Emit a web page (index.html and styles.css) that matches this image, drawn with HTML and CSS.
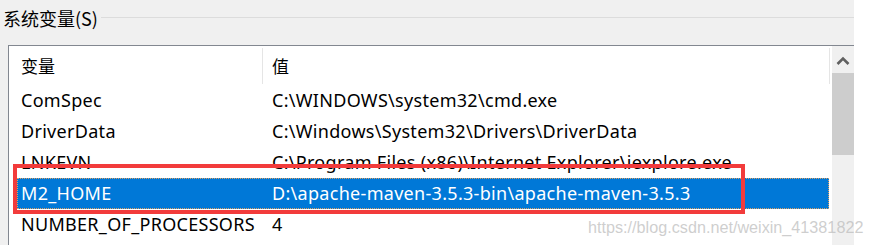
FILE: index.html
```html
<!DOCTYPE html>
<html lang="zh-CN">
<head>
<meta charset="utf-8">
<title>系统变量</title>
<link rel="stylesheet" href="styles.css">
</head>
<body>
<div class="dialog">
  <div class="group-head">
    <span class="group-title">系统变量(S)</span>
    <span class="group-line"></span>
  </div>
  <div class="list">
    <div class="list-body">
      <div class="hdr">
        <div class="hcell hcell-name">变量</div>
        <div class="hcell hcell-value">值</div>
      </div>
      <div class="row"><div class="c-name">ComSpec</div><div class="c-value">C:\WINDOWS\system32\cmd.exe</div></div>
      <div class="row"><div class="c-name">DriverData</div><div class="c-value">C:\Windows\System32\Drivers\DriverData</div></div>
      <div class="row"><div class="c-name">LNKEVN</div><div class="c-value">C:\Program Files (x86)\Internet Explorer\iexplore.exe</div></div>
      <div class="row row-selected"><div class="c-name">M2_HOME</div><div class="c-value">D:\apache-maven-3.5.3-bin\apache-maven-3.5.3</div></div>
      <div class="row"><div class="c-name">NUMBER_OF_PROCESSORS</div><div class="c-value">4</div></div>
    </div>
    <div class="vscroll">
      <div class="vs-up">
        <svg width="14" height="10" viewBox="0 0 14 10"><path d="M1.5 8 L7 2.5 L12.5 8" fill="none" stroke="#606060" stroke-width="2.6"/></svg>
      </div>
      <div class="vs-thumb"></div>
    </div>
  </div>
  <div class="mark-box"></div>
</div>
<div class="watermark">https://blog.csdn.net/weixin_41381822</div>
</body>
</html>
```

FILE: styles.css
```css
html, body {
  margin: 0;
  padding: 0;
  background: #ffffff;
}
body {
  position: relative;
  width: 869px;
  height: 245px;
  overflow: hidden;
  font-family: "Noto Sans", "Noto Sans CJK SC", sans-serif;
  font-size: 18px;
  color: #000;
}
.dialog {
  position: relative;
  width: 854px;
  height: 245px;
  background: #f0f0f0;
  overflow: hidden;
}
.group-head {
  display: flex;
  align-items: flex-start;
  height: 45px;
  padding-left: 3px;
}
.group-title {
  font-family: "Noto Sans CJK SC", sans-serif;
  font-size: 18px;
  line-height: 20px;
  margin-top: 8px;
  color: #000;
}
.group-line {
  flex: 1;
  margin-top: 17px;
  margin-left: 3px;
  border-top: 1px solid #dcdcdc;
}
.list {
  display: flex;
  margin-left: 8px;
  height: 200px;
  border-top: 1px solid #828790;
  border-left: 1px solid #828790;
  background: #fff;
}
.list-body {
  width: 823px;
}
.hdr {
  display: flex;
  height: 39px;
  margin-left: 8px;
  width: 813px;
}
.hcell {
  margin-top: 2px;
  height: 36px;
  line-height: 36px;
  font-family: "Noto Sans CJK SC", sans-serif;
  font-size: 17px;
  border-right: 1px solid #e5e5e5;
}
.hcell-name {
  width: 241px;
  padding-left: 4px;
}
.hcell-value {
  flex: 1;
  padding-left: 9px;
}
.row {
  display: flex;
  height: 31px;
  line-height: 31px;
  margin-left: 8px;
  width: 812px;
  white-space: nowrap;
  letter-spacing: 0.3px;
}
.c-name {
  width: 247px;
  padding-left: 4px;
  overflow: hidden;
}
.c-value {
  flex: 1;
  padding-left: 4px;
  overflow: hidden;
}
.row-selected {
  background: #0078d7;
  color: #fff;
  outline: 1px dotted #d9a066;
  outline-offset: -1px;
}
.vscroll {
  width: 22px;
  background: #f0f0f0;
}
.vs-up {
  height: 27px;
  display: flex;
  align-items: center;
  justify-content: center;
  padding-top: 3px;
  box-sizing: border-box;
}
.vs-up svg {
  display: block;
}
.vs-thumb {
  height: 82px;
  background: #cdcdcd;
}
.mark-box {
  position: absolute;
  left: 13px;
  top: 164px;
  width: 732px;
  height: 50px;
  box-sizing: border-box;
  border: 4px solid #f23b3b;
}
.watermark {
  position: absolute;
  left: 588px;
  top: 217px;
  font-family: "Liberation Sans", Arial, sans-serif;
  font-size: 16.2px;
  line-height: 20px;
  color: rgba(190, 190, 190, 0.75);
  white-space: nowrap;
}
```
